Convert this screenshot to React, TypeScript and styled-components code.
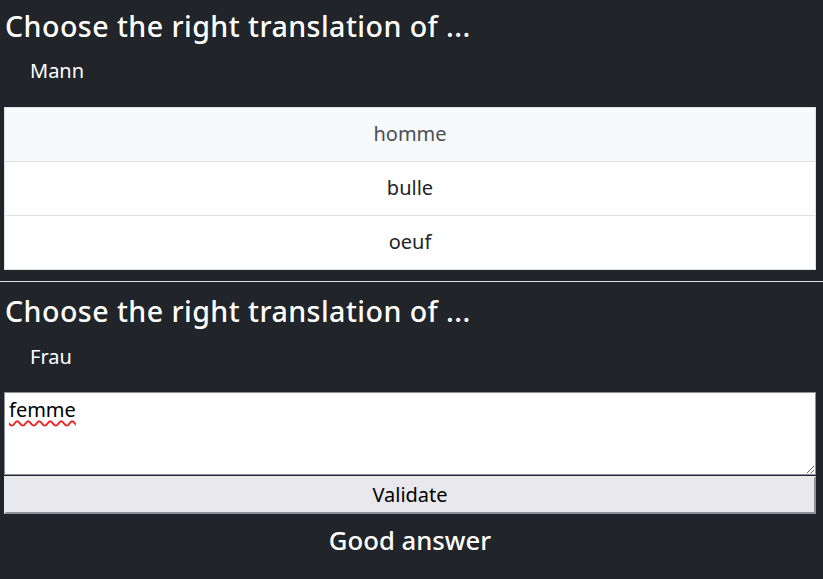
import React, { useState } from "react"
import styled, { createGlobalStyle } from "styled-components"

const GlobalStyle = createGlobalStyle`
  html, body {
    margin: 0;
    padding: 0;
    background: #212529;
  }
  body {
    font-family: "Noto Sans", "Open Sans", sans-serif;
    color: #fff;
  }
  * {
    box-sizing: border-box;
  }
`

const Page = styled.main`
  min-height: 100vh;
  background: #212529;
`

const Quiz = styled.section<{ $top?: number }>`
  padding: ${p => p.$top ?? 9}px 7px 0 4px;
`

const Title = styled.h2`
  margin: 0 0 0 1px;
  font-size: 28.6px;
  font-weight: 500;
  line-height: 1.2;
  letter-spacing: 0.45px;
  color: #fff;
`

const Word = styled.p`
  margin: 13px 0 0 26px;
  font-size: 20px;
  line-height: 1.5;
`

const Choices = styled.ul`
  list-style: none;
  margin: 21px 0 0;
  padding: 0;
  background: #fff;
  border: 1px solid #dee2e6;
  border-top: 0;
`

const Choice = styled.li<{ $hovered?: boolean }>`
  padding: 11px 16px 12px;
  font-size: 20px;
  line-height: 30px;
  text-align: center;
  border-top: 1px solid #dee2e6;
  background: ${p => (p.$hovered ? "#f8f9fa" : "#fff")};
  color: ${p => (p.$hovered ? "#495057" : "#212529")};
  cursor: pointer;
`

const Divider = styled.hr`
  margin: 11px 0 0;
  border: 0;
  border-top: 1px solid #dee2e6;
`

const Answer = styled.textarea`
  display: block;
  width: 100%;
  height: 83px;
  margin: 20px 0 0;
  padding: 2px 4px;
  font-family: "Noto Sans", "Open Sans", sans-serif;
  font-size: 20px;
  line-height: 30px;
  color: #000;
  background: #fff;
  border: 1px solid #8f8f9d;
  border-radius: 0;
  text-decoration: underline wavy #e22;
  text-decoration-skip-ink: none;
  text-underline-offset: 3px;
  outline: none;
`

const Validate = styled.button`
  display: block;
  width: 100%;
  height: 38px;
  margin: 1px 0 0;
  padding: 0;
  font-family: "Noto Sans", "Open Sans", sans-serif;
  font-size: 20px;
  line-height: 30px;
  color: #000;
  background: #e9e9ed;
  border: 2px solid;
  border-color: #e9e9ed #8f8f9d #8f8f9d #e9e9ed;
  border-radius: 0;
`

const Feedback = styled.h3`
  margin: 12px 0 0;
  font-size: 25.7px;
  font-weight: 500;
  line-height: 1.2;
  text-align: center;
  color: #fff;
`

export default function App() {
  const [answer, setAnswer] = useState("femme")
  const choices = ["homme", "bulle", "oeuf"]

  return (
    <Page>
      <GlobalStyle />
      <Quiz>
        <Title>Choose the right translation of ...</Title>
        <Word>Mann</Word>
        <Choices>
          {choices.map((c, i) => (
            <Choice key={c} $hovered={i === 0}>{c}</Choice>
          ))}
        </Choices>
      </Quiz>
      <Divider />
      <Quiz $top={12}>
        <Title>Choose the right translation of ...</Title>
        <Word>Frau</Word>
        <Answer value={answer} onChange={e => setAnswer(e.target.value)} />
        <Validate>Validate</Validate>
        <Feedback>Good answer</Feedback>
      </Quiz>
    </Page>
  )
}
